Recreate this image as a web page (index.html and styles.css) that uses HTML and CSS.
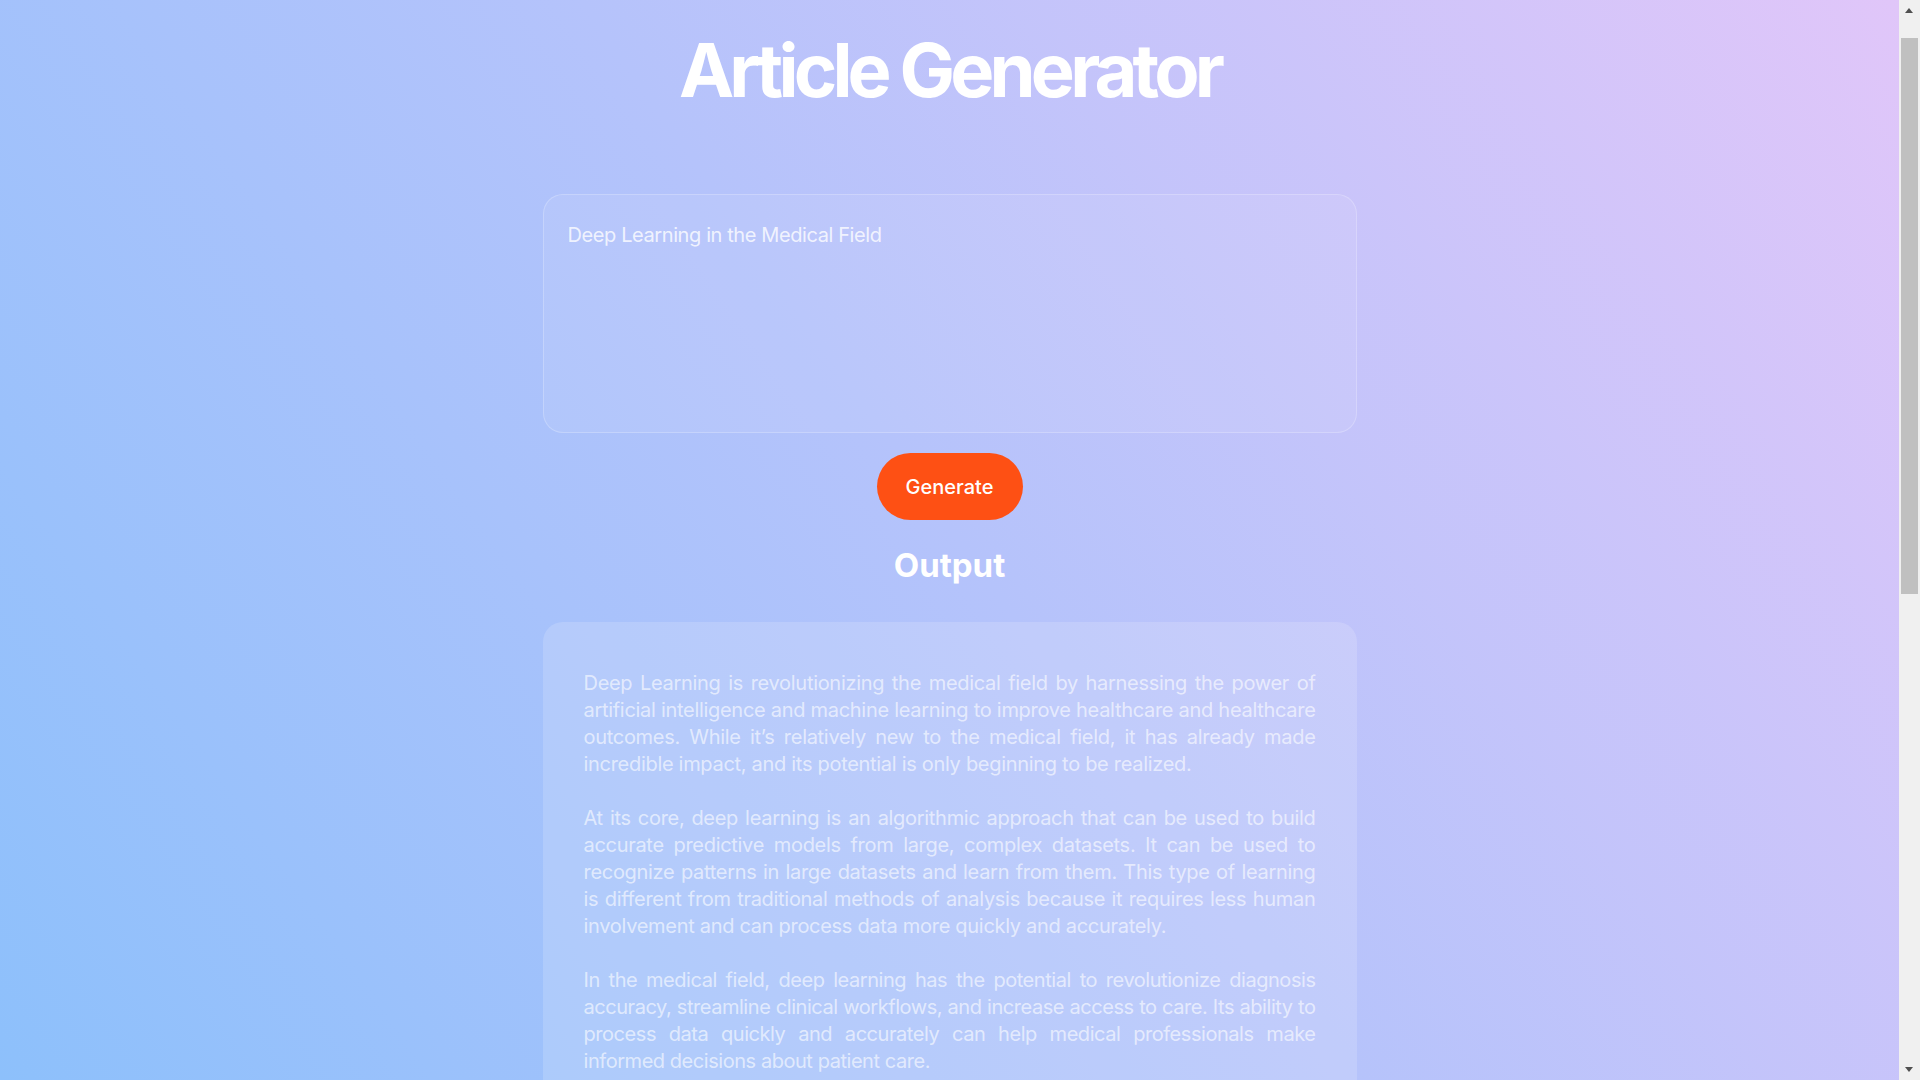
FILE: index.html
```html
<!DOCTYPE html>
<html lang="en">
<head>
<meta charset="utf-8">
<title>Article Generator</title>
<link rel="stylesheet" href="styles.css">
</head>
<body>
<main class="page">
  <h1 class="title">Article Generator</h1>
  <textarea class="prompt" spellcheck="false">Deep Learning in the Medical Field</textarea>
  <button class="generate" type="button">Generate</button>
  <h2 class="output-title">Output</h2>
  <section class="output">
    <p>Deep Learning is revolutionizing the medical field by harnessing the power of artificial intelligence and machine learning to improve healthcare and healthcare outcomes. While it’s relatively new to the medical field, it has already made incredible impact, and its potential is only beginning to be realized.</p>
    <p>At its core, deep learning is an algorithmic approach that can be used to build accurate predictive models from large, complex datasets. It can be used to recognize patterns in large datasets and learn from them. This type of learning is different from traditional methods of analysis because it requires less human involvement and can process data more quickly and accurately.</p>
    <p class="tight">In the medical field, deep learning has the potential to revolutionize diagnosis accuracy, streamline clinical workflows, and increase access to care. Its ability to process data quickly and accurately can help medical professionals make informed decisions about patient care.</p>
    <p>One of the most promising applications of deep learning in medicine is medical imaging. Deep learning algorithms can be trained to analyze X-rays, CT scans, MRIs and other images to detect abnormalities such as tumors, fractures and lesions, often with a level of accuracy that rivals that of experienced radiologists.</p>
    <p>Deep learning can also be applied to electronic health records. Models can sift through lab results and clinical notes to identify patients who are at risk of developing certain conditions, allowing clinicians to intervene earlier and prevent complications.</p>
    <p>Despite its potential, deep learning in medicine also faces challenges. Models require large amounts of high-quality, labeled data, and their predictions can be difficult to interpret. Careful validation, attention to bias and clear regulation will be essential to ensure these tools are safe and trustworthy.</p>
    <p>Ultimately, deep learning is not meant to replace doctors, but to augment their abilities. With careful development and responsible use, it has the potential to make healthcare more accurate, efficient and accessible for everyone.</p>
  </section>
</main>
<div class="scrollbar" aria-hidden="true">
  <span class="scroll-arrow scroll-up"></span>
  <span class="scroll-thumb"></span>
  <span class="scroll-arrow scroll-down"></span>
</div>
</body>
</html>
```
FILE: styles.css
```css
* {
  box-sizing: border-box;
}

html {
  min-height: 100%;
}

body {
  margin: 0;
  min-height: 100vh;
  font-family: Inter, "Noto Sans", "Liberation Sans", sans-serif;
  color: #ffffff;
  background: linear-gradient(55deg, #8dc0fb 0%, #b5c3fb 50%, #e1c6f9 100%);
  background-attachment: fixed;
}

.page {
  display: flex;
  flex-direction: column;
  align-items: center;
  padding: 25px 21px 80px 0;
}

.title {
  margin: 0;
  font-size: 74px;
  line-height: 90px;
  font-weight: 700;
  letter-spacing: -0.065em;
  color: #ffffff;
}

.prompt {
  display: block;
  width: 814px;
  height: 239px;
  margin: 79px 0 0;
  padding: 25px 24px;
  resize: none;
  border: 1px solid rgba(255, 255, 255, 0.22);
  border-radius: 20px;
  background: rgba(255, 255, 255, 0.08);
  font-family: Inter, "Noto Sans", sans-serif;
  font-size: 20px;
  line-height: 30px;
  letter-spacing: -0.4px;
  color: rgba(255, 255, 255, 0.8);
  outline: none;
}

.generate {
  margin: 20px 0 0;
  width: 146px;
  height: 67px;
  border: none;
  border-radius: 34px;
  background: #fe5014;
  font-family: Inter, "Noto Sans", sans-serif;
  font-size: 20px;
  font-weight: 500;
  color: #ffffff;
  cursor: pointer;
}

.output-title {
  margin: 25px 0 0;
  font-size: 33px;
  line-height: 40px;
  font-weight: 700;
  color: #ffffff;
}

.output {
  width: 814px;
  margin: 37px 0 0;
  padding: 48px 41px 48px;
  border-radius: 20px;
  background: rgba(255, 255, 255, 0.16);
}

.output p {
  margin: 0 0 27px;
  font-size: 20px;
  line-height: 27px;
  letter-spacing: -0.3px;
  text-align: justify;
  color: rgba(255, 255, 255, 0.62);
}

.output p.tight {
  letter-spacing: -0.45px;
}

.output p:last-child {
  margin-bottom: 0;
}

/* classic scrollbar drawn over the right edge of the window */
.scrollbar {
  position: fixed;
  top: 0;
  right: 0;
  width: 21px;
  height: 100vh;
  background: #f0f0f0;
}

.scroll-thumb {
  position: absolute;
  top: 38px;
  left: 2px;
  width: 17px;
  height: 556px;
  background: #c0c0c0;
}

.scroll-arrow {
  position: absolute;
  left: 6px;
  width: 0;
  height: 0;
  border-left: 4.5px solid transparent;
  border-right: 4.5px solid transparent;
}

.scroll-up {
  top: 8px;
  border-bottom: 5px solid #505050;
}

.scroll-down {
  bottom: 8px;
  border-top: 5px solid #505050;
}
```
